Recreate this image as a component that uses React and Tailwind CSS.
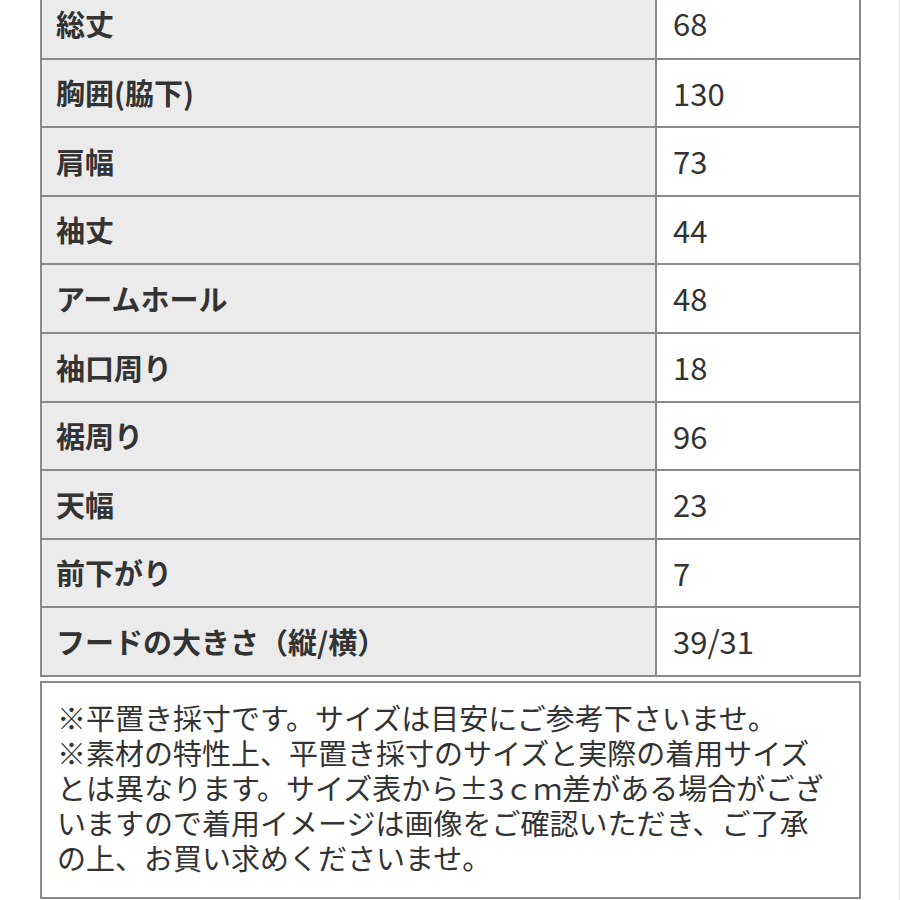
import React from 'react';

const rows = [
    ['総丈', '68'],
    ['胸囲(脇下)', '130'],
    ['肩幅', '73'],
    ['袖丈', '44'],
    ['アームホール', '48'],
    ['袖口周り', '18'],
    ['裾周り', '96'],
    ['天幅', '23'],
    ['前下がり', '7'],
    ['フードの大きさ（縦/横）', '39/31'],
];

const notes = [
    '※平置き採寸です。サイズは目安にご参考下さいませ。',
    '※素材の特性上、平置き採寸のサイズと実際の着用サイズ',
    'とは異なります。サイズ表から±3ｃｍ差がある場合がござ',
    'いますので着用イメージは画像をご確認いただき、ご了承',
    'の上、お買い求めくださいませ。',
];

export default function App() {
    return (
        <div
            className="w-[900px] h-[900px] overflow-hidden bg-white border-r border-[#dcdcdc] text-[#333]"
            style={{ fontFamily: '"Noto Sans CJK JP", "Noto Sans", sans-serif' }}
        >
            <div className="ml-[40px] mt-[-13px] w-[821px]">
                <div className="border-2 border-[#8a8a8a]">
                    {rows.map(([label, value], i) => (
                        <div
                            key={label}
                            className={`grid grid-cols-[615px_1fr] h-[68.6px] ${i > 0 ? 'border-t-2 border-[#8a8a8a]' : ''}`}
                        >
                            <div className="bg-[#ebebeb] border-r-2 border-[#8a8a8a] px-[14px] flex items-center text-[29px] font-bold whitespace-nowrap">
                                {label}
                            </div>
                            <div className="pl-[16px] flex items-center text-[31px]">
                                {value}
                            </div>
                        </div>
                    ))}
                </div>
                <div className="mt-[4px] border-2 border-[#8a8a8a] pl-[15px] pt-[17px] pb-[22px] text-[29px] leading-[35px]">
                    {notes.map(line => (
                        <div key={line} className="whitespace-nowrap">{line}</div>
                    ))}
                </div>
            </div>
        </div>
    );
}
